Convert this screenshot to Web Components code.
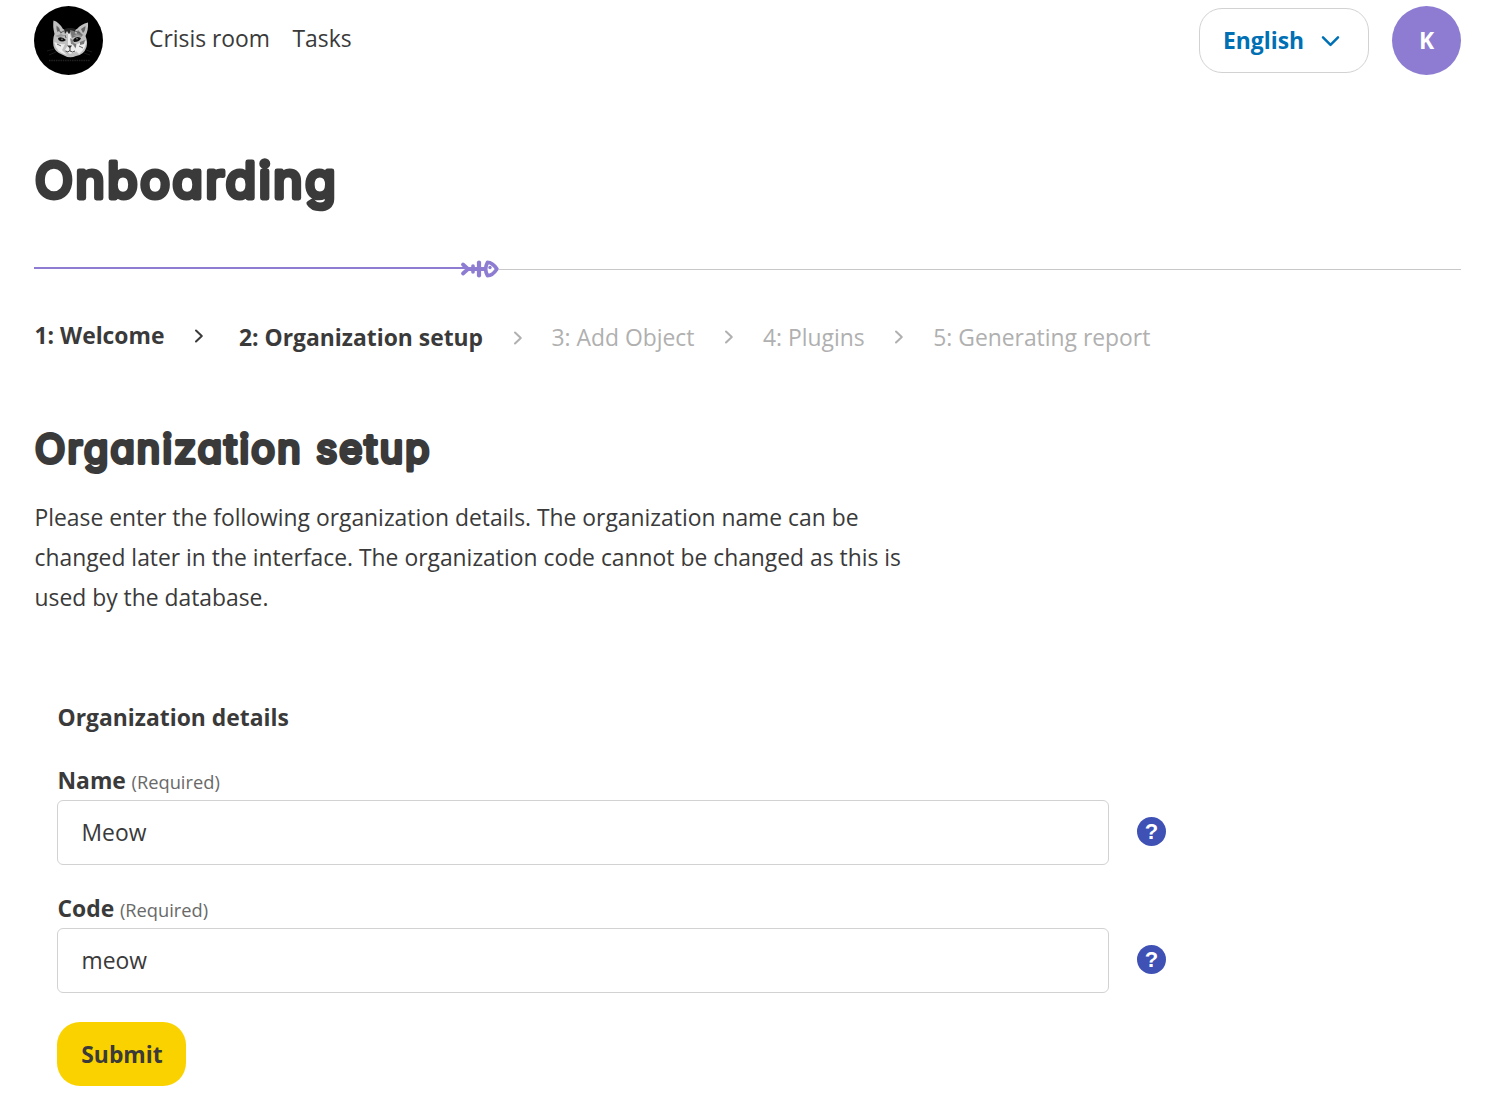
<!DOCTYPE html>
<html lang="en">
<head>
<meta charset="utf-8">
<title>Onboarding</title>
<style>
body{margin:0;background:#fff;color:#3a3a3a;font:22.86px/40px "Open Sans",sans-serif}
</style>
</head>
<body>
<onboarding-page></onboarding-page>
<script>
const define=(name,html,setup)=>{
  const t=document.createElement('template');
  t.innerHTML=html;
  customElements.define(name,class extends HTMLElement{
    constructor(){
      super();
      this.attachShadow({mode:'open'}).appendChild(t.content.cloneNode(true));
    }
    connectedCallback(){ if(setup) setup(this,this.shadowRoot); }
  });
};

define('cat-logo',`<style>:host{display:block;width:69px;height:69px}svg{display:block}</style>
<svg width="69" height="69" viewBox="0 0 69 69">
<defs><filter id="soft" x="-.2" y="-.2" width="1.4" height="1.4"><feGaussianBlur stdDeviation=".5"/></filter></defs>
<circle cx="34.5" cy="34.5" r="34.5" fill="#000"/>
<g filter="url(#soft)">
<path d="M19.500 14.500Q25 16 29 23Q36 26 43 23Q47 18 54 16.500Q54.500 24 51.500 30Q54 36 52.500 41Q50 49 42 50Q35 53 28 48.500Q21 46 19.500 40Q18.500 33 20.500 28Q18.500 20 19.500 14.500Z" fill="#c0c0c0"/>
<path d="M22.500 19.500Q25 21 26 24.500L23.500 26Q22 23 22.500 19.500ZM51.500 20L47 23L49 27Q51.500 25 51.500 20Z" fill="#666"/>
<path d="M30 23Q36 21 42 23L40 27L37 25L35 28L33 25L31 28Z" fill="#222"/>
<path d="M32 28L34 27L34 39L31 44L36 48L43 45L39 39L36 28Z" fill="#eee"/>
<path d="M20.500 36Q26 39 31 38L28 44L33 49Q22 46 20.500 37ZM43 38L52 35Q52 43 45 48L41 44Z" fill="#eee"/>
<path d="M36 24L40 25L43 30L38 32ZM44 24L49 29L47 31L42 29Z" fill="#777"/>
<path d="M36 32L39 34L40 39L37 38Z" fill="#888"/>
<path d="M21 30L27 28L31 30L24 31ZM39 30L43 28L48 30L48 31Z" fill="#999"/>
<path d="M24 32Q28 30 32 34Q28 37 24.500 34ZM39 34Q42 29 47 32Q46 36 40 36Z" fill="#111"/>
<path d="M39 37L42 38L42 42L40 40ZM46 36L51 34L50 38L46 39Z" fill="#777"/>
<path d="M33 39.500L38 39.500L36 42.500Z" fill="#333"/>
<path d="M36 42V45Q38.500 47 41 45M36 44.500Q34 47 31.500 45" fill="none" stroke="#444" stroke-width="1"/>
<path d="M24 24L28 27M26 27L30 25M41 25L46 27M31 29L32 32M45 40L49 42M23 38L27 40" stroke="#555" stroke-width=".9"/>
</g>
<circle cx="28" cy="33.300" r=".7" fill="#aaa"/><circle cx="43" cy="32.800" r=".7" fill="#aaa"/>
<path d="M20 43L13 45M22 46L15 49M52 44L58 46M50 47L56 49" stroke="#2a2a2a" stroke-width=".6"/>
<path d="M15 54.500H56" stroke="#222" stroke-width="1.500" stroke-dasharray="1.500 .8"/>
</svg>`);

define('nav-link',`<style>:host{display:block;white-space:nowrap}</style><slot></slot>`);

define('language-select',`<style>
:host{display:flex;box-sizing:border-box;width:170px;height:65px;border:1px solid #d2d2d2;border-radius:23px;padding:0 28px 0 23px;align-items:center;justify-content:space-between;color:#0070b4;font-weight:700}
svg{display:block}</style><span><slot></slot></span>
<svg width="19" height="12" viewBox="0 0 19 12" fill="none" stroke="#0070b4" stroke-width="2.5" stroke-linecap="round" stroke-linejoin="round"><path d="M2 2.300L9.500 9.900L17 2.300"/></svg>`);

define('user-avatar',`<style>:host{display:flex;width:69px;height:69px;border-radius:50%;background:#8d7cd1;color:#fff;font-weight:700;align-items:center;justify-content:center}</style><slot></slot>`);

define('site-header',`<style>
:host{display:flex;height:69px;align-items:center;padding:6px 31px 0 34px}
nav{display:flex;gap:22.500px;margin:0 auto 4px 46px}
language-select{margin-right:23px}
</style><cat-logo></cat-logo><nav><nav-link>Crisis room</nav-link><nav-link>Tasks</nav-link></nav><language-select>English</language-select><user-avatar>K</user-avatar>`);

define('round-heading',`<style>:host{display:block}svg{display:block;overflow:visible}
text{font-family:Inter,sans-serif;font-weight:400;font-optical-sizing:none;font-feature-settings:"cv11" 1;fill:#3a3a3a;stroke:#3a3a3a;stroke-linejoin:round;stroke-linecap:round}</style><svg role="heading"><text></text></svg>`,
(el,r)=>{
  const t=r.querySelector('text'),s=r.querySelector('svg');
  const size=+el.getAttribute('size'),w=+el.getAttribute('width'),h=+el.getAttribute('box');
  s.setAttribute('width',w+4);s.setAttribute('height',h);
  t.setAttribute('x',1);t.setAttribute('y',el.getAttribute('baseline'));
  t.setAttribute('font-size',size);t.setAttribute('stroke-width',size*.1);
  t.setAttribute('textLength',w);t.setAttribute('lengthAdjust','spacing');
  t.textContent=el.getAttribute('label');
});

define('fish-progress',`<style>
:host{display:flex;height:20px;align-items:center}
.done{width:429px;height:2.500px;background:#8d7cd1;margin-bottom:2px}
.rest{flex:1;height:1px;background:#c8c8c8}
svg{display:block;margin:0 -1px 0 -3px}
</style><div class="done"></div>
<svg width="40" height="20" viewBox="0 0 40 20" fill="none" stroke="#8d7cd1" stroke-linecap="round" stroke-linejoin="round">
<path d="M0 9H6" stroke-width="2" stroke-linecap="butt"/>
<path d="M3 5.500L8 10L3 14.500M8 10H26" stroke-width="3.800"/><path d="M13 7V13" stroke-width="3.600"/><path d="M19 3.500V16.500" stroke-width="4.200"/>
<path d="M27.500 3.300Q32.500 3.300 36.900 10Q32.500 16.700 27.500 16.700Q23.800 10 27.500 3.300Z" stroke-width="3.700" fill="#fff"/>
<circle cx="30" cy="8.500" r="1.700" fill="#8d7cd1" stroke="none"/></svg><div class="rest"></div>`);

define('step-item',`<style>
:host{display:flex;align-items:center;white-space:nowrap;color:#b0b0b0}
:host([active]){color:#3a3a3a;font-weight:700}
:host([last]) svg{display:none}
svg{display:block;margin:-2px 29.300px 0 29.300px}
:host([done]) svg{margin:-1px 34.500px 0 30px}
:host([current]) svg{color:#b0b0b0;margin:0 29px 0 29.500px}
</style><slot></slot><svg width="10" height="14" viewBox="0 0 10 14" fill="none" stroke="currentColor" stroke-width="2" stroke-linecap="round" stroke-linejoin="round"><path d="M2 1.500L7.800 7L2 12.500"/></svg>`);

define('step-list',`<style>:host{display:flex;align-items:flex-start;height:43px}step-item{height:40px}step-item:nth-child(2){padding-top:1px}step-item:nth-child(n+3){padding-top:3px}</style>
<step-item active done>1: Welcome</step-item><step-item active current>2: Organization setup</step-item><step-item>3: Add Object</step-item><step-item>4: Plugins</step-item><step-item last>5: Generating report</step-item>`);

define('help-badge',`<style>:host{display:flex;width:29px;height:29px;border-radius:50%;background:#3f51b5;color:#fff;align-items:center;justify-content:center;font:700 22px/29px "Liberation Sans",sans-serif}</style>?`);

define('form-field',`<style>
:host{display:block}
.label{display:flex;gap:5.700px;align-items:baseline;height:39px;font-weight:700;padding-left:.500px}
small{font-size:18.300px;font-weight:400;color:#696969}
.row{display:flex;align-items:center;gap:28px}
.box{box-sizing:border-box;width:1052px;height:65px;border:1px solid #d2d2d2;border-radius:6px;padding:0 23.500px;display:flex;align-items:center}
help-badge{margin-bottom:2px}
</style><div class="label"><span><slot name="label"></slot></span><small>(Required)</small></div><div class="row"><div class="box"><slot></slot></div><help-badge></help-badge></div>`);

define('submit-button',`<style>:host{display:flex;box-sizing:border-box;width:129px;height:64px;padding:1px 0 0 1px;border-radius:23px;background:#f9d200;font-weight:700;align-items:center;justify-content:center}</style><slot></slot>`);

define('onboarding-page',`<style>
:host{display:block}
main{display:block;padding:0 31px 0 34px}
.h1{margin-top:80px}
fish-progress{margin-top:50px}
step-list{margin:36px 0 0 .500px}
.h2{margin-top:73px}
p{margin:24px 0 0 .500px;width:880px}
form{display:flex;flex-direction:column;padding:0 23px}
.legend{margin:80px 0 23px .500px;font-weight:700}
.second{margin-top:24px}
submit-button{margin-top:29px}
</style>
<site-header></site-header>
<main>
<round-heading class="h1" label="Onboarding" size="49.5" width="300.5" box="54" baseline="42.9"></round-heading>
<fish-progress></fish-progress>
<step-list></step-list>
<round-heading class="h2" label="Organization setup" size="39.5" width="394.5" box="43" baseline="32"></round-heading>
<p>Please enter the following organization details. The organization name can be changed later in the interface. The organization code cannot be changed as this is used by the database.</p>
<form>
<div class="legend">Organization details</div>
<form-field><span slot="label">Name</span>Meow</form-field>
<form-field class="second"><span slot="label">Code</span>meow</form-field>
<submit-button>Submit</submit-button>
</form>
</main>`);
</script>
</body>
</html>
